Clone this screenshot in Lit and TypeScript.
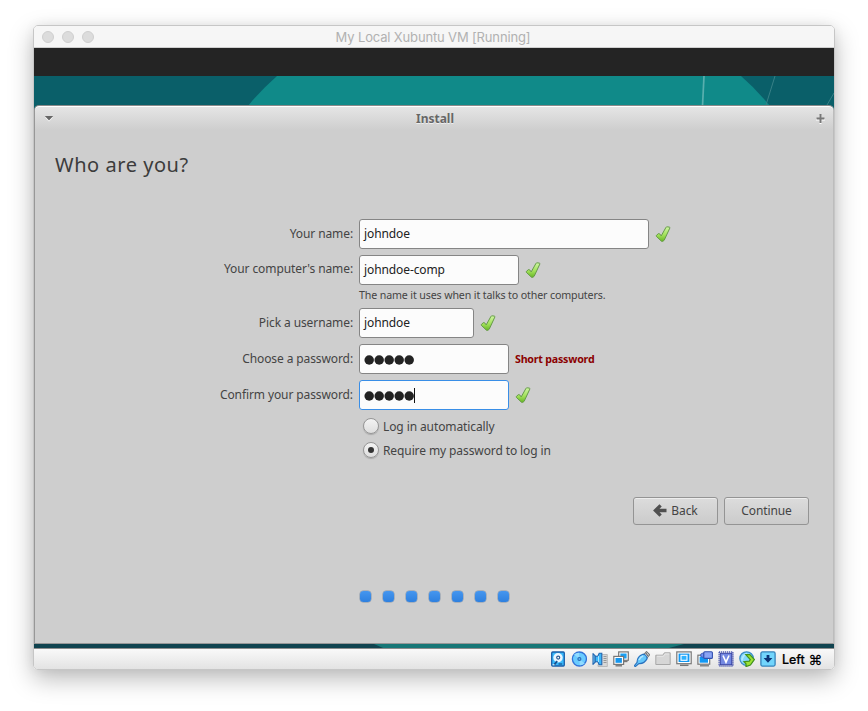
import { LitElement, html, css, svg } from "lit";
import { customElement, property } from "lit/decorators.js";

const deviceIcons = [
  // hard disk
  svg`<rect x="1.7" y="1" width="12.6" height="14" rx="1" fill="#39b9fb" stroke="#1b5fa9" stroke-width="1.3"/><circle cx="8" cy="6.7" r="4.7" fill="#eaf6ff"/><circle cx="8.2" cy="6.6" r="1.5" fill="#fff" stroke="#2b5a92" stroke-width="1.2"/><path d="m4 13.8 3.2-3.6" stroke="#17508f" stroke-width="1.8"/><path d="M8.5 13h3.7" stroke="#17508f" stroke-width="1.2"/><path d="M2.6 13.8h2" stroke="#fff"/>`,
  // optical disc
  svg`<circle cx="8.4" cy="8" r="7" fill="#69cbff" stroke="#3273d8" stroke-width="1.3"/><path d="M8.4 8 3 3.5A7 7 0 0 1 8 1.8zM8.4 8l5.4 4.5a7 7 0 0 1-5 1.7z" fill="#92dcff"/><circle cx="8.4" cy="8" r="1.5" fill="#58b5f3" stroke="#2a68b4" stroke-width="1.1"/>`,
  // audio
  svg`<path d="M9.5 3.5h5.8v12H6v-2h3.5z" fill="#d8d8d8" stroke="#b0b0b0" stroke-width=".8"/><path d="M11.5 5.5h3M11.5 7.5h3M11.5 9.5h3M11.5 11.5h3" stroke="#888" stroke-width=".8"/><path d="M1 2.6 3.2 4.8v6.4L1 13.4z" fill="#7fd3ff" stroke="#2366b0" stroke-width="1.1" stroke-linejoin="round"/><path d="M3.2 5.2h2.6l1.4-3h2.6v11.6H7.2l-1.4-3H3.2z" fill="#3cb8fa" stroke="#2366b0" stroke-width="1.1"/><path d="M6.5 5v6" stroke="#a4e3ff"/>`,
  // network
  svg`<rect x="5.7" y=".9" width="9.6" height="8.4" fill="#fff" stroke="#777" stroke-width="1.2"/><rect x="7.4" y="2.5" width="6.2" height="5" fill="#1aa1f5"/><path d="M10.5 10.5h4" stroke="#777" stroke-width="1.4"/><rect x=".8" y="5.4" width="9.8" height="8" fill="#fff" stroke="#777" stroke-width="1.2"/><rect x="2.5" y="7" width="6.4" height="4.8" fill="#1597ef"/><path d="M2.5 14.8h6.5" stroke="#777" stroke-width="1.4"/>`,
  // usb
  svg`<path d="m9.5 3.8 3-3.2 3.2 3.2-3.2 3.5z" fill="#fff" stroke="#777" stroke-width="1.1"/><path d="M12.2 2.8h.1M13.4 4.1h.1" stroke="#444" stroke-width="1.3" stroke-linecap="square"/><path d="M9 3.2c2 .2 4 2.2 4.1 4.4-1.8 3.3-4.8 5.2-8.2 4.9L1.3 15.6l-1-.9 2.8-3.3C3 7.8 5.4 4.4 9 3.2z" fill="#65c7fb" stroke="#2872bf" stroke-width="1.2"/><path d="M5 9C6 7 7.2 5.7 9.2 5" stroke="#b2e6ff" fill="none" stroke-width="1.5"/>`,
  // shared folder
  svg`<path d="M.8 4.2h7l1.6-2.4h5.8v11.7H.8z" fill="#d6d6d6" stroke="#a8a8a8"/><path d="M2 5.3h6.5L10 3h4.2" stroke="#e6e6e6" fill="none"/>`,
  // display
  svg`<rect x=".8" y=".9" width="14.4" height="11.8" fill="#fff" stroke="#777" stroke-width="1.2"/><rect x="2.6" y="2.6" width="10.8" height="8.4" fill="#1298f3"/><rect x="5" y="4.3" width="6" height="5" fill="#2eb2ff" stroke="#fff" stroke-width="1.1"/><path d="M4 14.3h8.5" stroke="#777" stroke-width="1.5"/>`,
  // recording
  svg`<rect x=".9" y="4.2" width="11.8" height="9" fill="#fff" stroke="#777" stroke-width="1.2"/><rect x="2.6" y="5.8" width="8.4" height="5.9" fill="#1298f3"/><path d="M3 14.8h9" stroke="#777" stroke-width="1.3"/><rect x="6.8" y=".8" width="8.6" height="6.6" rx="1" fill="#8ba4f4" stroke="#3350ae" stroke-width="1.1"/><path d="M3.8 3 6.5 1.8v4.7L3.8 5.5z" fill="#7594f5" stroke="#3350ae" stroke-width=".8"/>`,
  // cpu
  svg`<rect x="1.1" y="1.1" width="13.8" height="13.8" fill="none" stroke="#4450ad" stroke-width="1.5" stroke-dasharray="1.1 .9"/><rect x="2.3" y="2.3" width="11.4" height="11.4" fill="#7489e2" stroke="#3844a5"/><path d="M5 4.5 8 11.2l3-6.7" fill="none" stroke="#fff" stroke-width="1.6"/>`,
  // mouse integration
  svg`<circle cx="7.6" cy="7.6" r="6.8" fill="#83d8fb" stroke="#3a8bc8" stroke-width="1.2"/><path d="M3 9.5C3.2 6 5 3.8 8 2.6" stroke="#b2eaff" stroke-width="1.8" fill="none"/><path d="M6.8 3.6h4l4.6 4.9-4 5.6-4.4 1.5v-2.8l-2-2.1 5.3-.6 1-1.6z" fill="#9be135" stroke="#43921c" stroke-width="1.2"/>`,
  // keyboard capture
  svg`<rect x=".9" y=".9" width="14.2" height="14.2" rx="1.5" fill="#72d5fc" stroke="#3583bb" stroke-width="1.3"/><path d="M6.6 3.9h2.8v3.2h3L8 11.8 3.6 7.1h3z" fill="#0c3476"/>`,
];

@customElement("valid-mark")
export class ValidMark extends LitElement {
  static styles = css`
    :host { display: block; width: 18px; height: 18px; }
    svg { display: block; }
  `;
  render() {
    return html`<svg width="18" height="18" viewBox="0 0 18 18">
      <defs><linearGradient id="g" x1="0" y1="0" x2="0" y2="1"><stop offset="0" stop-color="#cff5a4"/><stop offset=".55" stop-color="#a3e25b"/><stop offset="1" stop-color="#66b524"/></linearGradient></defs>
      <path d="M1.3 10.5 3.3 8.7q.8-.6 1.4.2l1.5 2 4.7-8.4q.4-.8 1.3-.7l2.1.3q.9.2.5 1L9.3 15q-.3.6-.9.9l-1.2.5q-.5.2-.9-.3l-5-4.8q-.4-.4 0-.8z" fill="url(#g)" stroke="#659a48" stroke-width="1"/>
    </svg>`;
  }
}

@customElement("form-row")
export class FormRow extends LitElement {
  @property() label = "";
  @property() value = "";
  @property({ type: Number }) width = 150;
  @property({ type: Boolean }) secret = false;
  @property({ type: Boolean }) focused = false;
  @property({ type: Boolean }) raised = false;
  @property() warning = "";
  static styles = css`
    :host { display: flex; align-items: center; height: 30px; }
    .label { width: 318px; text-align: right; margin-right: 6px; white-space: nowrap; }
    .raised { padding-bottom: 2px; }
    .field { box-sizing: border-box; height: 30px; border: 1px solid #858585; border-radius: 3px; background: #fcfcfc; color: #222; padding: 0 4px; display: flex; align-items: center; margin-right: 6px; }
    .focused { border-color: #398ee7; }
    .dots { display: block; margin-top: 2px; }
    .caret { width: 1px; height: 15px; background: #111; }
    .warning { font-size: 10.67px; font-weight: 700; color: #8b0000; letter-spacing: -.22px; }
  `;
  render() {
    const dots = this.value.length;
    return html`<div class="label ${this.raised ? "raised" : ""}">${this.label}</div>
      <div class="field ${this.focused ? "focused" : ""}" style="width:${this.width}px">
        ${this.secret
          ? html`<svg class="dots" width=${dots * 10} height="10">${[...this.value].map((_, i) => svg`<circle cx=${i * 10 + 5.2} cy="5" r="4.75" fill="#222"/>`)}</svg>`
          : html`<span>${this.value}</span>`}
        ${this.focused ? html`<span class="caret"></span>` : ""}
      </div>
      ${this.warning ? html`<span class="warning">${this.warning}</span>` : html`<valid-mark></valid-mark>`}`;
  }
}

@customElement("app-root")
export class AppRoot extends LitElement {
  static styles = css`
    :host { display: block; box-sizing: border-box; width: 868px; height: 711px; padding: 25px 33px 0; overflow: hidden; background: #fff; font-family: "Noto Sans", sans-serif; font-size: 12px; line-height: 16px; letter-spacing: -.1px; color: #444; }
    .window { box-sizing: border-box; width: 802px; height: 645px; border: 1px solid #c6c6c6; border-radius: 5px; overflow: hidden; display: flex; flex-direction: column; background: #f5f5f5; }
    .shadow { width: 802px; border-radius: 5px; box-shadow: 0 9px 24px rgba(0,0,0,.27), 0 0 12px rgba(0,0,0,.05); }
    .titlebar { height: 21px; border-bottom: 1px solid #cfcfcf; display: grid; grid-template-columns: 99px 1fr 101px; align-items: center; background: #f6f6f6; }
    .lights { display: flex; gap: 8px; padding-left: 8px; }
    .light { box-sizing: border-box; width: 12px; height: 12px; border-radius: 50%; background: #dcdcdc; border: 1px solid #cfcfcf; }
    .title { text-align: center; font: 13px/20px Inter, sans-serif; letter-spacing: -.15px; color: #b1b1b1; padding-top: 1px; }
    .panel { height: 28px; background: #242424; }
    .wallpaper { display: block; height: 29px; }
    .desktop { background: #0a5f69; }
    .dialog { box-sizing: border-box; height: 539px; border: 1px solid #979797; border-right-color: #bcbcbc; border-top-color: #8a8a8a; border-radius: 5px 5px 0 0; box-shadow: inset 0 1px #fff; background: linear-gradient(#e6e6e6, #cecece 24px); display: flex; flex-direction: column; }
    .dialog-title { height: 25px; display: flex; align-items: center; justify-content: space-between; padding: 0 8px 0 9px; font-weight: 700; letter-spacing: 0; color: #666; text-shadow: 0 1px #eee; }
    .heading { font-size: 20px; line-height: 28px; color: #3c3c3c; margin: 20px 0 0 20px; letter-spacing: .55px; }
    .form { margin-top: 40px; display: flex; flex-direction: column; gap: 6px; }
    .hint { font-size: 10.67px; line-height: 12px; margin: -2px 0 1px 324px; height: 12px; letter-spacing: -.14px; }
    .choices { margin: 8px 0 0 328px; display: flex; flex-direction: column; gap: 8px; }
    .choice { display: flex; align-items: center; gap: 4px; height: 16px; }
    .choice-text { padding-top: 2px; }
    .radio { box-sizing: border-box; width: 16px; height: 16px; border: 1px solid #969696; border-radius: 50%; background: linear-gradient(#f3f3f3, #dedede); display: grid; place-items: center; box-shadow: 0 1px 1px #aaa; }
    .bullet { width: 6px; height: 6px; border-radius: 50%; background: #333; }
    .actions { display: flex; justify-content: flex-end; gap: 6px; margin: 39px 24px 0 0; }
    .button { box-sizing: border-box; width: 85px; height: 28px; border: 1px solid #949494; border-radius: 3px; background: linear-gradient(#dcdcdc, #cbcbcb); box-shadow: inset 0 1px #ededed; display: flex; align-items: center; justify-content: center; gap: 4px; font: inherit; letter-spacing: inherit; color: #444; padding: 0 0 1px; }
    .steps { display: flex; gap: 12px; margin: 66px 0 0 325px; }
    .step { width: 11px; height: 11px; border-radius: 3.5px; background: linear-gradient(#4596ef, #2e80df); box-shadow: 0 0 0 .5px #8494a8; }
    .status { flex: 1; border-top: 1px solid #8c8c8c; display: flex; align-items: center; justify-content: flex-end; gap: 5px; padding-right: 11px; background: linear-gradient(#f9f9f9, #e3e3e3); }
    .status svg { display: block; }
    .host-key { display: flex; gap: 4px; align-items: center; font: 500 12.5px/16px Inter, "DejaVu Sans", sans-serif; letter-spacing: -.1px; color: #000; width: 41px; margin-left: 1px; white-space: nowrap; -webkit-text-stroke: .2px #000; padding-top: 1px; }
    .command { font-size: 14px; -webkit-text-stroke: 0; }
  `;
  render() {
    return html`<div class="shadow"><div class="window">
      <div class="titlebar"><div class="lights"><i class="light"></i><i class="light"></i><i class="light"></i></div><div class="title">My Local Xubuntu VM [Running]</div></div>
      <div class="panel"></div>
      <div class="desktop">
        <svg class="wallpaper" width="800" height="29" viewBox="0 0 800 29">
          <rect width="800" height="29" fill="#0a5f69"/>
          <path d="M214 30Q226 15 243 0H707Q723 14 736 30z" fill="#108a89"/>
          <path d="m670 0-1.5 30" stroke="#59afae" stroke-width="1.7"/><path d="m741 0-9 29M800 17l-7 12" stroke="#388087"/>
        </svg>
        <div class="dialog">
          <div class="dialog-title">
            <svg width="10" height="7"><path d="M1 2.2h8L5 6.5z" fill="#fff"/><path d="M.8 1h8.4L5 5.5z" fill="#666"/></svg>
            <span>Install</span>
            <svg width="9" height="10"><path d="M4.5 1v9M0 5.5h9" stroke="#fff" stroke-width="2"/><path d="M4.5 0v9M.5 4.5h8" stroke="#777" stroke-width="2"/></svg>
          </div>
          <div class="heading">Who are you?</div>
          <div class="form">
            <form-row label="Your name:" value="johndoe" width="290"></form-row>
            <form-row label="Your computer's name:" value="johndoe-comp" width="160" raised></form-row>
            <div class="hint">The name it uses when it talks to other computers.</div>
            <form-row label="Pick a username:" value="johndoe" width="115"></form-row>
            <form-row label="Choose a password:" value="12345" secret warning="Short password"></form-row>
            <form-row label="Confirm your password:" value="12345" secret focused></form-row>
          </div>
          <div class="choices">
            <div class="choice"><span class="radio"></span><span class="choice-text">Log in automatically</span></div>
            <div class="choice"><span class="radio"><i class="bullet"></i></span><span class="choice-text">Require my password to log in</span></div>
          </div>
          <div class="actions">
            <button class="button"><svg width="14" height="14" viewBox="0 0 14 14"><path d="M7.6 1.3 2.4 6.5l5.2 5.2M3.5 6.5h10" fill="none" stroke="#505050" stroke-width="3.3"/></svg>Back</button>
            <button class="button">Continue</button>
          </div>
          <div class="steps">${Array.from({ length: 7 }, () => html`<i class="step"></i>`)}</div>
        </div>
        <svg class="wallpaper" style="height:4px" width="800" height="4" viewBox="0 0 800 4"><rect width="800" height="4" fill="#10434f"/><path d="M340 0h310l-15 4H349z" fill="#177777"/></svg>
      </div>
      <div class="status">${deviceIcons.map((i) => html`<svg width="16" height="16" viewBox="0 0 16 16">${i}</svg>`)}<span class="host-key">Left <span class="command">⌘</span></span></div>
    </div></div>`;
  }
}
